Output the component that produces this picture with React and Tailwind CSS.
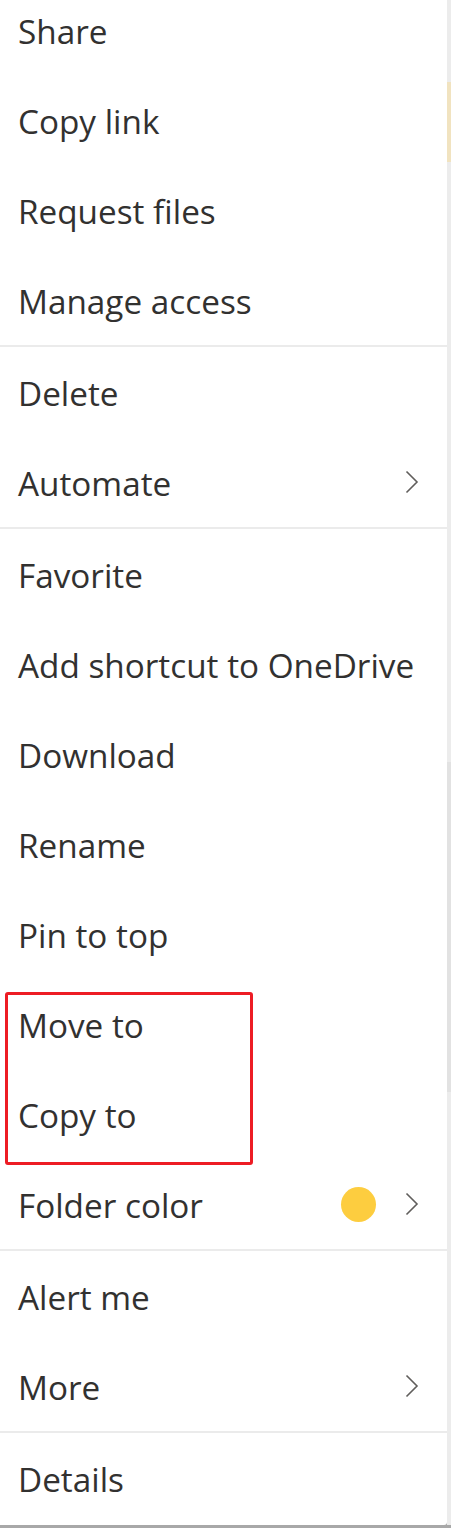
import React from "react";

const sections = [
  [{ label: "Share" }, { label: "Copy link" }, { label: "Request files" }, { label: "Manage access" }],
  [{ label: "Delete" }, { label: "Automate", sub: true }],
  [
    { label: "Favorite" },
    { label: "Add shortcut to OneDrive" },
    { label: "Download" },
    { label: "Rename" },
    { label: "Pin to top" },
    { label: "Move to" },
    { label: "Copy to" },
    { label: "Folder color", dot: true, sub: true },
  ],
  [{ label: "Alert me" }, { label: "More", sub: true }],
  [{ label: "Details" }],
];

function Chevron() {
  return (
    <svg width="14" height="24" viewBox="0 0 14 24" className="shrink-0">
      <path d="M1.5 1.5 L12 12 L1.5 22.5" fill="none" stroke="#605e5c" strokeWidth="1.6" />
    </svg>
  );
}

function Item({ label, sub, dot }) {
  return (
    <div className="h-[90px] flex items-center pl-[18px] pr-[28px] text-[#323130]">
      <span className="flex-1 text-[33.3px] leading-none pt-[3px]">{label}</span>
      {dot && <span className="w-[35px] h-[35px] rounded-full bg-[#fdcd3f] mr-[29px]" />}
      {sub && <Chevron />}
    </div>
  );
}

export default function App() {
  return (
    <div className="w-[451px] h-[1528px] overflow-hidden flex bg-[#a8a8a8]" style={{ fontFamily: '"Open Sans", "Noto Sans", sans-serif' }}>
      <div className="w-[447px] h-[1525px] bg-white rounded-br-[3px] relative overflow-hidden">
        <div className="mt-[-15px] flex flex-col">
          {sections.map((items, i) => (
            <div key={i} className={i > 0 ? "border-t-2 border-[#ebebeb]" : ""}>
              {items.map((it) => (
                <Item key={it.label} {...it} />
              ))}
            </div>
          ))}
        </div>
        <div className="absolute left-[5px] top-[992px] w-[248px] h-[173px] border-[3px] border-[#ed1c24] rounded-[3px]" />
      </div>
      <div className="w-[4px] h-[1525px] flex flex-col bg-[#ececec]">
        <div className="h-[82px]" />
        <div className="h-[80px] bg-[#f1e3c0]" />
        <div className="h-[600px]" />
        <div className="h-[330px] bg-[#e2e2e2]" />
        <div className="flex-1" />
      </div>
    </div>
  );
}
